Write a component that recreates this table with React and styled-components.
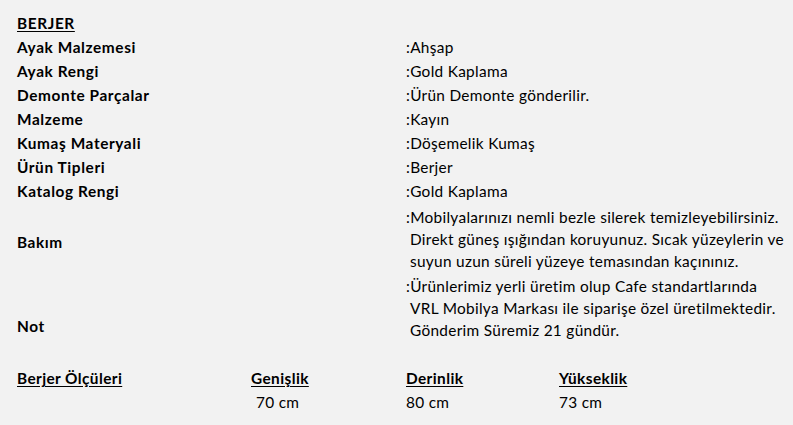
import React from "react";
import styled, { createGlobalStyle } from "styled-components";

const Global = createGlobalStyle`
  html, body { margin: 0; padding: 0; background: #f2f2f2; }
  body { font-family: "Lato", "Open Sans", "Liberation Sans", sans-serif; color: #000; }
`;

const Sheet = styled.div`
  width: 793px;
  height: 425px;
  box-sizing: border-box;
  padding: 11px 0 0 17px;
  font-size: 15.4px;
  letter-spacing: 0.3px;
  overflow: hidden;
`;

const SpecGrid = styled.div`
  display: grid;
  grid-template-columns: 389px 1fr;
`;

const Label = styled.div`
  font-weight: 700;
  letter-spacing: 0.6px;
  line-height: 24px;
  align-self: center;
  padding-top: ${(p) => p.$shift || 0}px;
  text-decoration: ${(p) => (p.$underline ? "underline" : "none")};
  text-underline-offset: 2px;
`;

const Value = styled.div`
  line-height: ${(p) => (p.$multi ? "22px" : "24px")};
  padding-top: ${(p) => (p.$multi ? "3px" : "0")};
  white-space: pre;
`;

const Line = styled.div`
  padding-left: ${(p) => (p.$indent ? "4px" : "0")};
`;

const Sizes = styled.div`
  display: grid;
  grid-template-columns: 234px 155px 153px 1fr;
  margin-top: 25px;
`;

const SizeHead = styled.div`
  font-weight: 700;
  letter-spacing: 0.4px;
  line-height: 24px;
  text-decoration: underline;
  text-underline-offset: 2px;
`;

const SizeVal = styled.div`
  line-height: 24px;
  padding-left: ${(p) => (p.$indent ? "5px" : "0")};
`;

const rows = [
  ["Ayak Malzemesi", "Ahşap"],
  ["Ayak Rengi", "Gold Kaplama"],
  ["Demonte Parçalar", "Ürün Demonte gönderilir."],
  ["Malzeme", "Kayın"],
  ["Kumaş Materyali", "Döşemelik Kumaş"],
  ["Ürün Tipleri", "Berjer"],
  ["Katalog Rengi", "Gold Kaplama"],
];

const multi = [
  {
    label: "Bakım",
    shift: 8,
    lines: [
      "Mobilyalarınızı nemli bezle silerek temizleyebilirsiniz.",
      "Direkt güneş ışığından koruyunuz. Sıcak yüzeylerin ve",
      "suyun uzun süreli yüzeye temasından kaçınınız.",
    ],
  },
  {
    label: "Not",
    shift: 38,
    lines: [
      "Ürünlerimiz yerli üretim olup Cafe standartlarında",
      "VRL Mobilya Markası ile siparişe özel üretilmektedir.",
      "Gönderim Süremiz 21 gündür.",
    ],
  },
];

export default function App() {
  return (
    <>
      <Global />
      <Sheet>
        <SpecGrid>
          <Label $underline>BERJER</Label>
          <Value />
          {rows.map(([l, v]) => (
            <React.Fragment key={l}>
              <Label>{l}</Label>
              <Value>:{v}</Value>
            </React.Fragment>
          ))}
          {multi.map((m) => (
            <React.Fragment key={m.label}>
              <Label $shift={m.shift}>{m.label}</Label>
              <Value $multi>
                {m.lines.map((t, i) => (
                  <Line key={i} $indent={i > 0}>
                    {i === 0 ? ":" + t : t}
                  </Line>
                ))}
              </Value>
            </React.Fragment>
          ))}
        </SpecGrid>
        <Sizes>
          <SizeHead>Berjer Ölçüleri</SizeHead>
          <SizeHead>Genişlik</SizeHead>
          <SizeHead>Derinlik</SizeHead>
          <SizeHead>Yükseklik</SizeHead>
          <SizeVal />
          <SizeVal $indent>70 cm</SizeVal>
          <SizeVal>80 cm</SizeVal>
          <SizeVal>73 cm</SizeVal>
        </Sizes>
      </Sheet>
    </>
  );
}
